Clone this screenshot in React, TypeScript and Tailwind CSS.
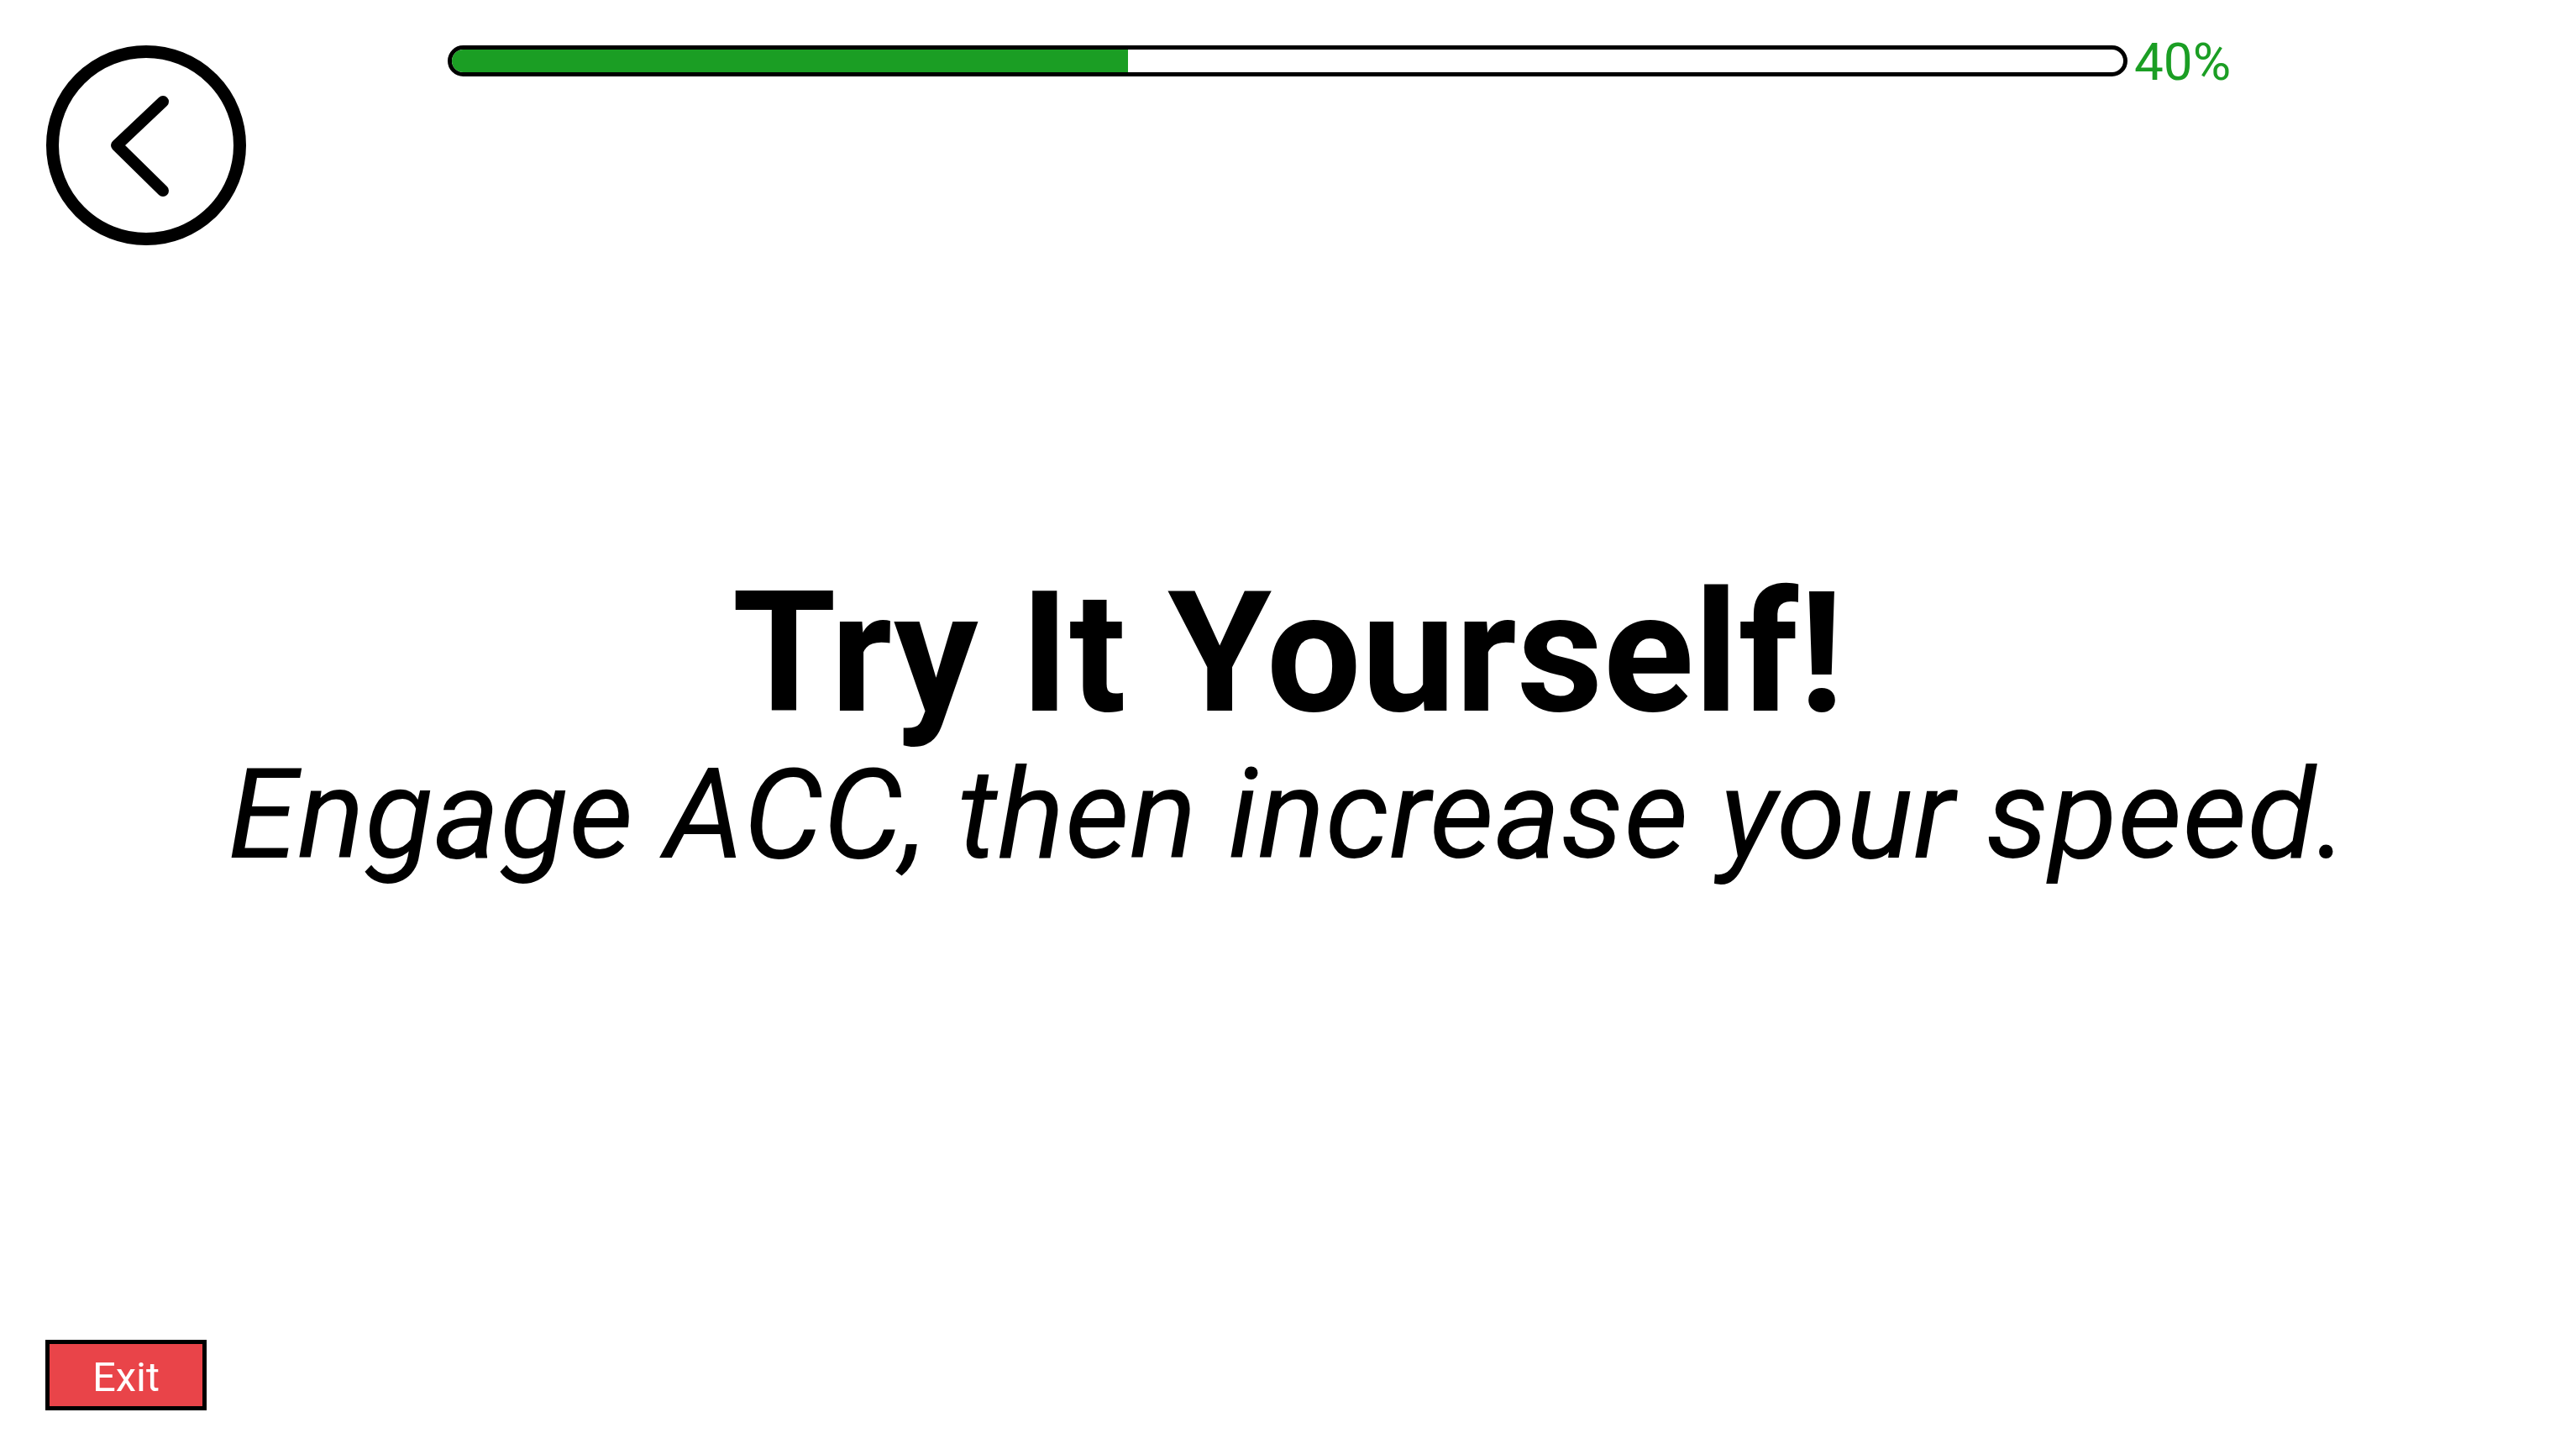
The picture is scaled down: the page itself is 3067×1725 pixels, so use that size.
import React from "react";

export default function App() {
  const pct = 40;
  return (
    <div
      className="w-[3067px] h-[1725px] bg-white flex flex-col overflow-hidden"
      style={{ fontFamily: "Roboto, 'Noto Sans', sans-serif" }}
    >
      <div className="flex flex-row items-start pt-[54px] pl-[55px]">
        <button className="w-[238px] h-[238px] shrink-0">
          <svg width="238" height="238" viewBox="0 0 238 238">
            <circle cx="119" cy="119" r="111.5" fill="none" stroke="#000" strokeWidth="15" />
            <polyline
              points="139,67 84,119 139,173"
              fill="none"
              stroke="#000"
              strokeWidth="14"
              strokeLinecap="round"
              strokeLinejoin="round"
            />
          </svg>
        </button>
        <div className="flex flex-row items-start ml-[240px]">
          <div className="w-[2000px] h-[37px] rounded-full border-[5px] border-black bg-white overflow-hidden">
            <div className="h-full bg-[#1b9e24]" style={{ width: `${pct + 0.45}%` }} />
          </div>
          <span className="ml-[8px] -mt-[11px] text-[62px] leading-none text-[#1b9e24]">40%</span>
        </div>
      </div>

      <div className="flex flex-col items-center mt-[386px]">
        <h1 className="text-[200px] leading-none font-bold text-black">Try It Yourself!</h1>
        <p className="text-[150px] leading-none italic text-black mt-[17px]">
          Engage ACC, then increase your speed.
        </p>
      </div>

      <div className="mt-auto pl-[54px] pb-[46px]">
        <button className="w-[192px] h-[84px] bg-[#e94449] border-[5px] border-black text-white text-[49px] leading-none flex items-center justify-center pt-[5px]">
          Exit
        </button>
      </div>
    </div>
  );
}
